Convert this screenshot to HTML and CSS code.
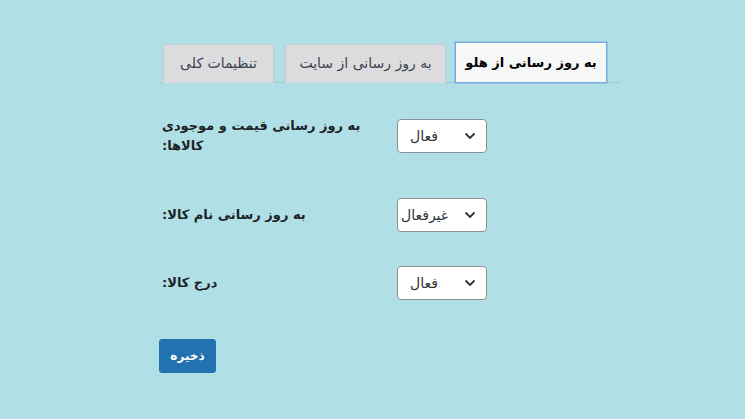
FILE: index.html
```html
<!DOCTYPE html>
<html lang="fa">
<head>
    <meta charset="UTF-8">
    <meta name="viewport" content="width=device-width, initial-scale=1.0">
    <title>تنظیمات هلو</title>
    <link rel="stylesheet" href="styles.css">
</head>
<body>
<div class="wrap">
    <div class="tabs">
        <a class="tab t1" href="#">تنظیمات کلی</a>
        <a class="tab t2" href="#">به روز رسانی از سایت</a>
        <a class="tab t3 active" href="#">به روز رسانی از هلو</a>
    </div>

    <form class="settings" method="post" action="#">
        <div class="row">
            <label class="lbl" dir="rtl">به روز رسانی قیمت و موجودی کالاها:</label>
            <div class="sel">
                <select class="ipt" name="update_price">
                    <option>فعال</option>
                    <option>غیرفعال</option>
                </select>
                <svg class="arrow" width="12" height="8" viewBox="0 0 12 8"><path d="M1.5 1.5 L6 6 L10.5 1.5" fill="none" stroke="#2c3338" stroke-width="1.8"/></svg>
            </div>
        </div>
        <div class="row row2">
            <label class="lbl" dir="rtl">به روز رسانی نام کالا:</label>
            <div class="sel">
                <select class="ipt" name="update_name">
                    <option>غیرفعال</option>
                    <option>فعال</option>
                </select>
                <svg class="arrow" width="12" height="8" viewBox="0 0 12 8"><path d="M1.5 1.5 L6 6 L10.5 1.5" fill="none" stroke="#2c3338" stroke-width="1.8"/></svg>
            </div>
        </div>
        <div class="row row3">
            <label class="lbl" dir="rtl">درج کالا:</label>
            <div class="sel">
                <select class="ipt" name="insert_product">
                    <option>فعال</option>
                    <option>غیرفعال</option>
                </select>
                <svg class="arrow" width="12" height="8" viewBox="0 0 12 8"><path d="M1.5 1.5 L6 6 L10.5 1.5" fill="none" stroke="#2c3338" stroke-width="1.8"/></svg>
            </div>
        </div>
        <div class="buttonContainer">
            <button class="btn1" type="submit">ذخیره</button>
        </div>
    </form>
</div>
</body>
</html>
```

FILE: styles.css
```css
body {
    font-family: "DejaVu Sans", "Noto Sans", sans-serif;
    background-color: #b0e0e6;
    margin: 0;
    padding: 0;
    color: #1d2327;
}

.wrap {
    padding: 41px 0 0 160px;
}

.tabs {
    width: 460px;
    display: flex;
    align-items: flex-end;
    padding-left: 3px;
    box-sizing: border-box;
    border-bottom: 1px solid #a9c7cc;
    height: 42px;
}

.tab {
    display: block;
    box-sizing: border-box;
    height: 39px;
    line-height: 37px;
    margin-bottom: -1px;
    background: #dcdcde;
    border: 1px solid #c8cbcd;
    border-bottom: none;
    color: #3c434a;
    font-size: 14px;
    text-align: center;
    text-decoration: none;
    white-space: nowrap;
}

.t1 {
    width: 111px;
}

.t2 {
    width: 161px;
    margin-left: 11px;
}

.t3 {
    width: 152px;
    margin-left: 9px;
}

.tab.active {
    height: 41px;
    line-height: 39px;
    margin-bottom: -1px;
    background: #f6f7f7;
    color: #000;
    font-size: 13px;
    font-weight: bold;
    border: 1px solid #72aee6;
    box-shadow: 0 0 0 1px #9ec2e6;
}

.settings {
    padding-top: 33px;
}

.row {
    display: flex;
    align-items: center;
}

.row2 {
    margin-top: 42px;
}

.row3 {
    margin-top: 34px;
}

.lbl {
    width: 205px;
    margin-left: 2px;
    margin-right: 30px;
    text-align: left;
    font-size: 13px;
    font-weight: bold;
    line-height: 20px;
    color: #1d2327;
}

.sel {
    position: relative;
    width: 90px;
    height: 34px;
}

.ipt {
    appearance: none;
    -webkit-appearance: none;
    width: 90px;
    height: 34px;
    padding: 0 26px 0 12px;
    border: 1px solid #8c8f94;
    border-radius: 4px;
    background: #fff;
    font-family: "DejaVu Sans", sans-serif;
    font-size: 14px;
    color: #2c3338;
    box-sizing: border-box;
}

.row2 .ipt {
    padding-left: 3px;
}

.arrow {
    position: absolute;
    right: 11px;
    top: 13px;
    pointer-events: none;
}

.buttonContainer {
    padding-top: 39px;
}

.btn1 {
    width: 57px;
    height: 34px;
    border: 1px solid #2271b1;
    border-radius: 3px;
    background-color: #2271b1;
    color: #fff;
    font-family: "DejaVu Sans", sans-serif;
    font-size: 12px;
    font-weight: bold;
    cursor: pointer;
    margin-left: -1px;
}
```
